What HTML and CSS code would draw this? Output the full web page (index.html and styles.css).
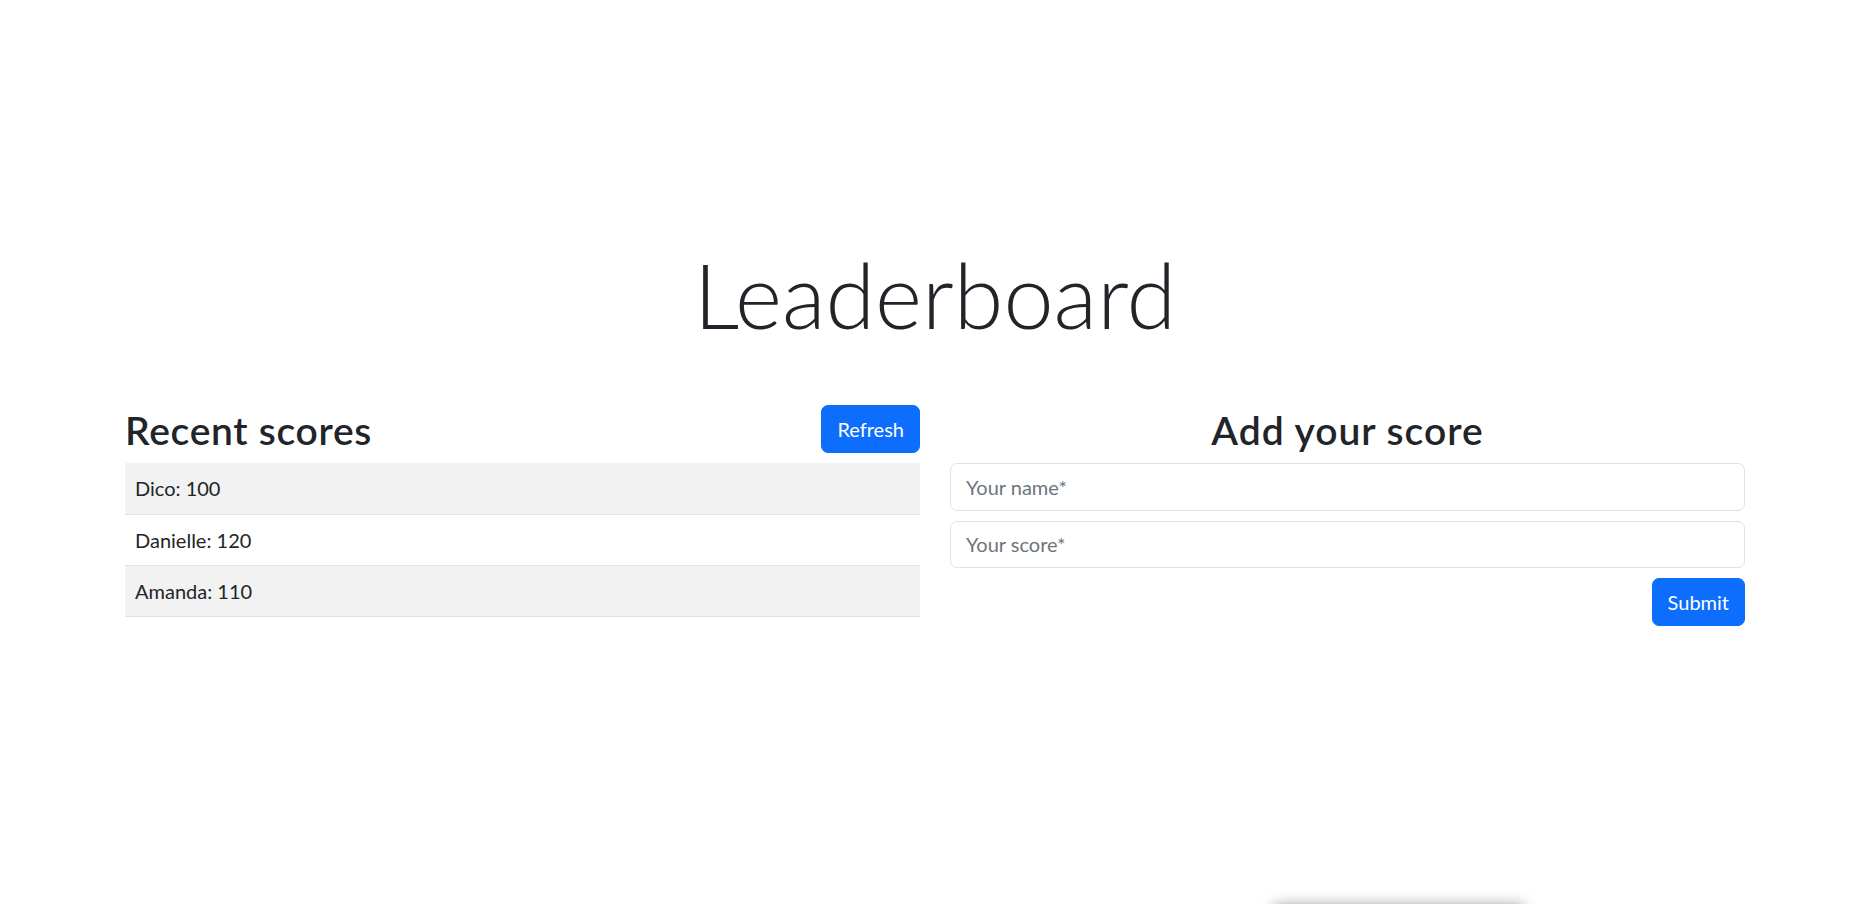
FILE: index.html
```html
<!DOCTYPE html>
<html lang="en">
<head>
<meta charset="utf-8">
<title>Leaderboard</title>
<link rel="stylesheet" href="styles.css">
</head>
<body>
<main class="container">
  <h1 class="title">Leaderboard</h1>
  <div class="columns">
    <section class="scores">
      <div class="scores-header">
        <h2 class="heading">Recent scores</h2>
        <button class="btn" type="button">Refresh</button>
      </div>
      <table class="score-table">
        <tbody>
          <tr class="striped"><td>Dico: 100</td></tr>
          <tr><td>Danielle: 120</td></tr>
          <tr class="striped"><td>Amanda: 110</td></tr>
        </tbody>
      </table>
    </section>
    <section class="add">
      <h2 class="heading heading-center">Add your score</h2>
      <form class="score-form">
        <input class="field" type="text" placeholder="Your name*">
        <input class="field" type="text" placeholder="Your score*">
        <div class="form-actions">
          <button class="btn" type="submit">Submit</button>
        </div>
      </form>
    </section>
  </div>
</main>
<div class="peek-card"></div>
</body>
</html>
```
FILE: styles.css
```css
* { box-sizing: border-box; }

html, body {
  margin: 0;
  padding: 0;
  background: #ffffff;
  overflow: hidden;
}

body {
  font-family: Lato, "Open Sans", "Liberation Sans", sans-serif;
  font-size: 20px;
  line-height: 30px;
  color: #212529;
}

.container {
  width: 1650px;
  margin: 0 auto;
  padding: 240px 15px 0;
}

.title {
  margin: 0 0 57px;
  font-size: 90px;
  font-weight: 300;
  line-height: 108px;
  text-align: center;
}

.columns {
  display: grid;
  grid-template-columns: 1fr 1fr;
  column-gap: 30px;
}

.scores-header {
  display: flex;
  justify-content: space-between;
  align-items: flex-start;
  margin-bottom: 8px;
}

.heading {
  margin: 0;
  font-size: 39px;
  font-weight: 600;
  line-height: 50px;
  letter-spacing: 0.7px;
}

.heading-center {
  text-align: center;
  margin-bottom: 8px;
  letter-spacing: 1px;
}

.btn {
  height: 47.5px;
  padding: 0 15px;
  border: 1px solid #0d6efd;
  border-radius: 7px;
  background: #0d6efd;
  color: #ffffff;
  font-family: inherit;
  font-size: 20px;
  line-height: 30px;
  cursor: pointer;
}

.score-table {
  width: 100%;
  border-collapse: collapse;
}

.score-table td {
  padding: 10px 10px;
  height: 51.25px;
  line-height: 30px;
  border-bottom: 1px solid #dee2e6;
}

.score-table .striped td {
  background: #f2f2f2;
}

.score-form {
  display: flex;
  flex-direction: column;
  gap: 10px;
}

.field {
  display: block;
  width: 100%;
  height: 47.5px;
  padding: 0 15px;
  border: 1px solid #dee2e6;
  border-radius: 7px;
  font-family: inherit;
  font-size: 20px;
  color: #212529;
  background: #ffffff;
}

.field::placeholder {
  color: #6c757d;
}

.form-actions {
  display: flex;
  justify-content: flex-end;
}

.peek-card {
  position: fixed;
  left: 1274px;
  top: 906px;
  width: 250px;
  height: 60px;
  background: #ffffff;
  box-shadow: 0 0 14px rgba(0, 0, 0, 0.45);
}
```
